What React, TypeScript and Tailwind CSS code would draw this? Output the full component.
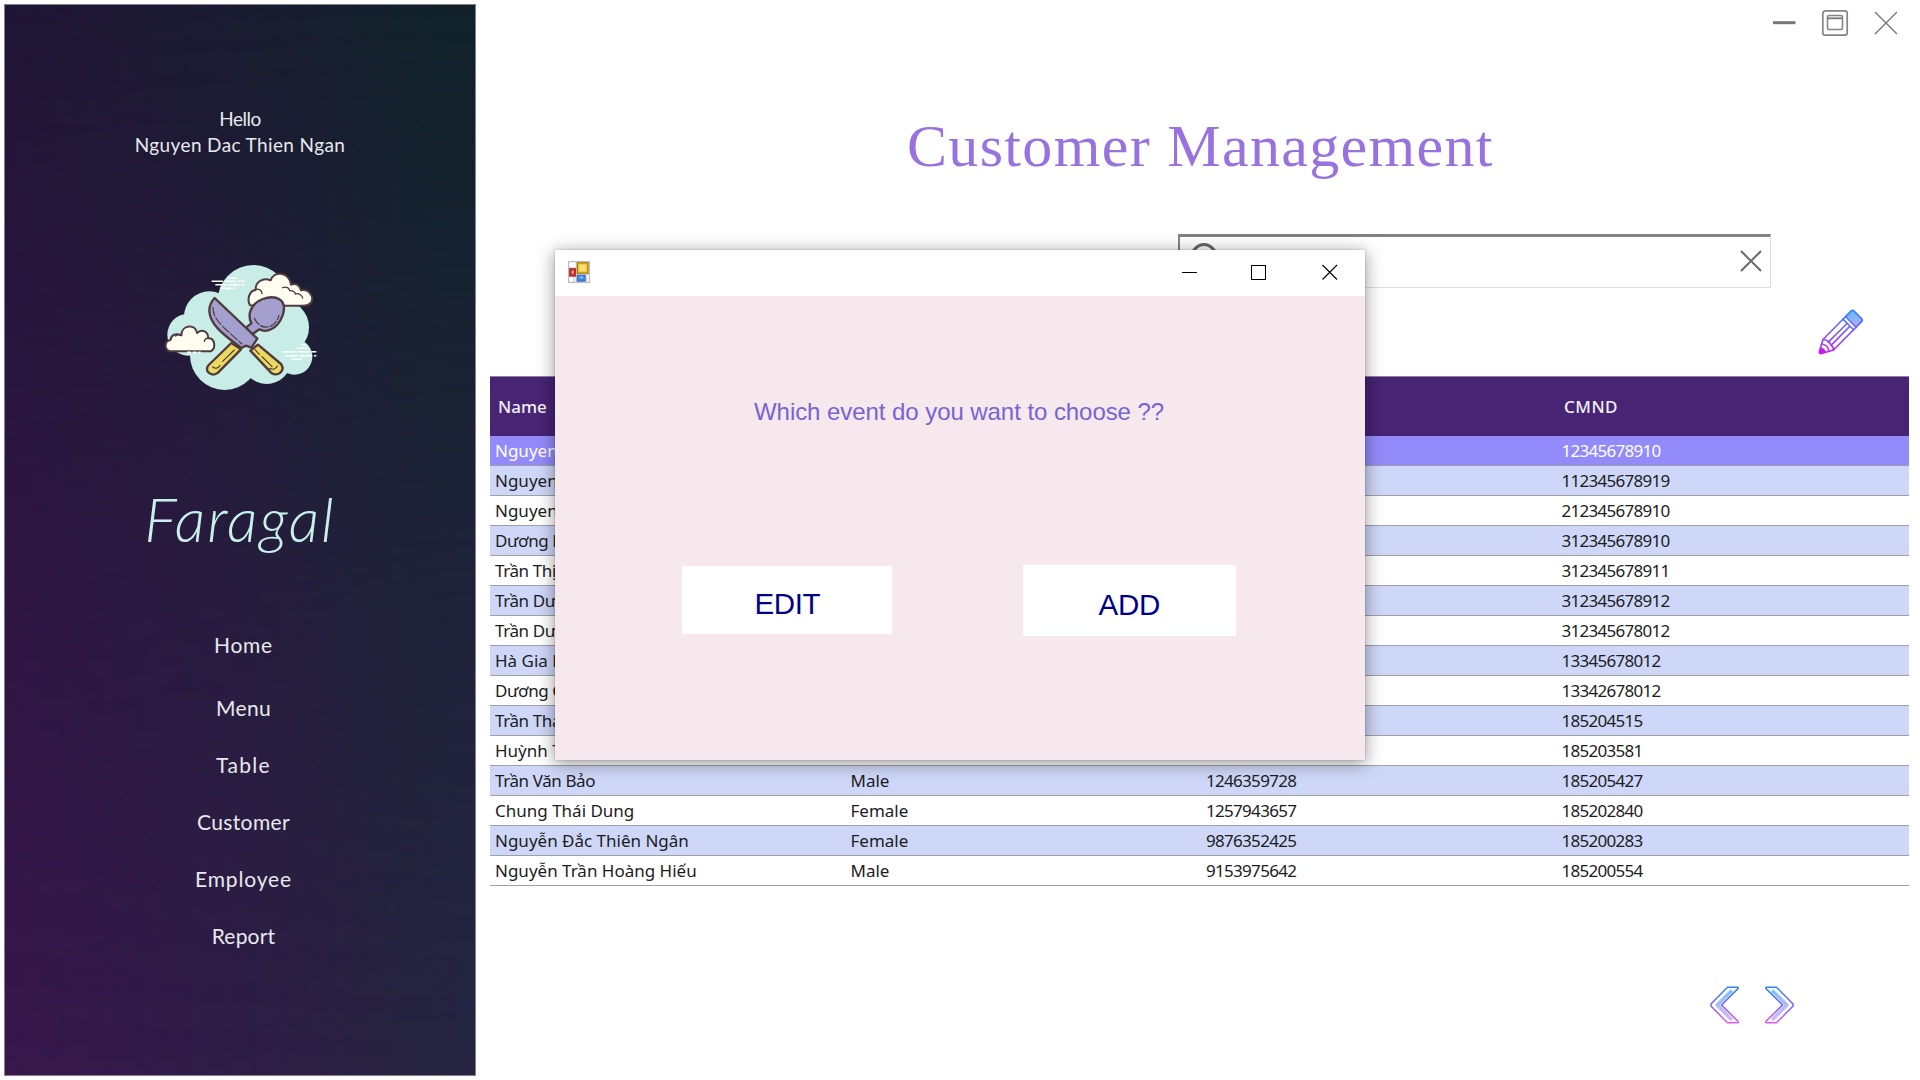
import React from 'react';

const NAV: { label: string; cls: string }[] = [
  { label: 'Home', cls: 'mb-[35px] tracking-[0.7px]' },
  { label: 'Menu', cls: 'mb-[29px] tracking-[0.34px]' },
  { label: 'Table', cls: 'mb-[29px] tracking-[1.3px]' },
  { label: 'Customer', cls: 'mb-[29px] tracking-[0.37px]' },
  { label: 'Employee', cls: 'mb-[29px] tracking-[0.85px]' },
  { label: 'Report', cls: 'tracking-[0.22px]' },
];

type Row = [string, string, string, string];

const ROWS: Row[] = [
  ['Nguyen', '', '', '12345678910'],
  ['Nguyen', '', '', '112345678919'],
  ['Nguyen', '', '', '212345678910'],
  ['Dương H', '', '', '312345678910'],
  ['Trần Thị', '', '', '312345678911'],
  ['Trần Dư', '', '', '312345678912'],
  ['Trần Dư', '', '', '312345678012'],
  ['Hà Gia B', '', '', '13345678012'],
  ['Dương G', '', '', '13342678012'],
  ['Trần Thá', '', '', '185204515'],
  ['Huỳnh T', '', '', '185203581'],
  ['Trần Văn Bảo', 'Male', '1246359728', '185205427'],
  ['Chung Thái Dung', 'Female', '1257943657', '185202840'],
  ['Nguyễn Đắc Thiên Ngân', 'Female', '9876352425', '185200283'],
  ['Nguyễn Trần Hoàng Hiếu', 'Male', '9153975642', '185200554'],
];

function rowColor(i: number) {
  if (i === 0) return 'bg-[#948bfa] text-white';
  return i % 2 === 1 ? 'bg-[#cfd7f8] text-[#1c1c22]' : 'bg-white text-[#1c1c22]';
}

function nameTracking(name: string) {
  return /^(Trần|Dương)/.test(name) ? 'tracking-[-0.4px]' : '';
}

function Logo() {
  const outline = { stroke: '#4f3a3e', strokeWidth: 6, strokeLinejoin: 'round' as const, strokeLinecap: 'round' as const };
  return (
    <svg viewBox="0 0 600 540" className="h-[180px] w-[200px]" fill="none">
      <g fill="#c8ede6">
        <circle cx="340" cy="182" r="107" />
        <circle cx="208" cy="230" r="76" />
        <circle cx="145" cy="284" r="63" />
        <circle cx="254" cy="346" r="104" />
        <circle cx="380" cy="358" r="74" />
        <circle cx="463" cy="350" r="54" />
        <circle cx="425" cy="262" r="82" />
      </g>
      <g stroke="#fff" strokeWidth="4.5">
        <path d="M215 124H316M226 134H313M240 145H286M258 146H273M262 114H290" strokeDasharray="34 5" />
        <path d="M428 335H529M436 347H529M455 358H486M470 325H503M484 314H498" strokeDasharray="38 5" />
      </g>
      <path
        d="M330 196C320 178 328 152 347 150C345 128 368 110 392 121C398 94 446 92 453 134C468 128 480 136 483 151C508 145 522 172 514 186C510 195 500 197 488 197H345Z"
        fill="#fffcf0"
        {...outline}
      />
      <path d="M348 148C358 146 366 152 366 161M428 143C440 138 448 145 449 152C460 151 466 158 466 162C478 158 487 168 488 174" {...outline} strokeWidth="4" />
      <path
        d="M90 334C74 330 70 304 92 299C93 284 108 279 124 286C124 254 168 250 171 279C184 266 204 272 205 295C224 294 230 324 212 334Z"
        fill="#fffcf0"
        {...outline}
      />
      <path d="M193 304C194 297 199 294 206 295M125 286C119 282 110 284 107 288" {...outline} strokeWidth="4" />
      <path d="M141 337H182" stroke="#fff" strokeWidth="5" strokeDasharray="12 5" />
      <path d="M274 309L206 375C190 392 215 414 234 398L303 328Z" fill="#ecd95f" {...outline} strokeWidth="7" />
      <path d="M318 263L336 283L358 268C378 280 412 268 428 226C444 176 406 164 368 177C330 192 322 226 334 250Z" fill="#a3a0cf" {...outline} strokeWidth="7" />
      <path d="M343 234C350 252 365 263 382 261C398 260 411 246 417 226" {...outline} strokeWidth="3.5" strokeDasharray="24 6" />
      <path d="M224 174L352 296L334 323L318 317L304 324C262 292 208 256 208 212C208 192 216 182 224 174Z" fill="#a3a0cf" {...outline} strokeWidth="7" />
      <path d="M219 202C218 236 244 257 306 312" {...outline} strokeWidth="3.5" strokeDasharray="26 7" />
      <path d="M354 314L423 372C437 392 414 412 393 398L331 332Z" fill="#ecd95f" {...outline} strokeWidth="7" />
      <path d="M283 330L248 364M240 376C235 386 225 387 218 381M345 329L358 343M366 350L396 380M388 385C398 390 408 388 412 378" {...outline} strokeWidth="3.5" />
    </svg>
  );
}

function Sidebar() {
  return (
    <aside className="relative mt-1 ml-1 h-[1072px] w-[472px] shrink-0 overflow-hidden border border-[#85808f] bg-[linear-gradient(to_right,#201535,#1a1c30_50%,#11222a_92%)]">
      <div className="absolute inset-0 bg-[linear-gradient(to_right,#38174c,#2f1c47_45%,#272340_85%,#262442)] [mask-image:linear-gradient(to_bottom,transparent,rgba(0,0,0,0.65)_55%,black)]" />
      <div className="relative flex flex-col items-center font-[Lato] text-[#e8e9ee]">
        <div className="mt-[101px] h-[26px] text-[19px] leading-[26px] tracking-[-0.5px]">Hello</div>
        <div className="h-[26px] text-[19px] leading-[26px] tracking-[0.375px]">Nguyen Dac Thien Ngan</div>
        <div className="mt-[82px]">
          <Logo />
        </div>
        <div className="mt-[62px] h-[80px] text-[61px] leading-[74px] font-light tracking-[2px] text-[#c9f0ea] italic">Faragal</div>
        <nav className="mt-[69px] ml-[7px] flex flex-col items-center text-[21px]">
          {NAV.map((n) => (
            <a key={n.label} className={`h-7 leading-7 ${n.cls}`}>
              {n.label}
            </a>
          ))}
        </nav>
      </div>
    </aside>
  );
}

function WindowControls() {
  return (
    <div className="flex h-[46px] items-center justify-end pr-[23px]">
      <svg viewBox="0 0 124 28" className="h-7 w-[124px]" fill="none">
        <path d="M0 13.7H22.5" stroke="#777" strokeWidth="3" />
        <rect x="49.8" y="1.8" width="24.4" height="24.4" rx="2.5" stroke="#858585" strokeWidth="1.7" />
        <rect x="54.5" y="6.5" width="15" height="14" rx="1.5" stroke="#858585" strokeWidth="1.6" />
        <path d="M54.5 9.3H69.5" stroke="#777" strokeWidth="1.8" />
        <path d="M102 3L124 25M124 3L102 25" stroke="#777" strokeWidth="1.4" />
      </svg>
    </div>
  );
}

function SearchBox() {
  return (
    <div className="ml-[688px] flex h-[54px] w-[593px] items-center justify-between border-t-[3px] border-r border-b border-l-2 border-t-[#828282] border-r-[#dedede] border-b-[#dedede] border-l-[#828282] bg-white pr-[8px] pl-[11px]">
      <svg viewBox="0 0 32 32" className="mb-[8px] h-8 w-8" fill="none" stroke="#666" strokeWidth="3">
        <circle cx="13" cy="14" r="11.5" />
        <path d="M21 22L29 30" />
      </svg>
      <svg viewBox="0 0 22 22" className="mb-[2px] h-[22px] w-[22px]" fill="none" stroke="#6a6a6a" strokeWidth="2">
        <path d="M1 1L21 21M21 1L1 21" />
      </svg>
    </div>
  );
}

function Pencil() {
  return (
    <svg viewBox="0 0 46 46" className="h-[46px] w-[46px]" fill="none" strokeLinejoin="round" strokeLinecap="round">
      <defs>
        <linearGradient id="pen" x1="0" y1="0" x2="0" y2="46" gradientUnits="userSpaceOnUse">
          <stop offset="0" stopColor="#2e80fb" />
          <stop offset="0.5" stopColor="#7a62f8" />
          <stop offset="1" stopColor="#c81ff2" />
        </linearGradient>
        <linearGradient id="eraser" x1="0" y1="0" x2="0" y2="18" gradientUnits="userSpaceOnUse">
          <stop offset="0" stopColor="#5cbcfb" />
          <stop offset="1" stopColor="#b5aafb" />
        </linearGradient>
      </defs>
      <path d="M28 7L33 1.8Q34.5 .8 36 2L43.5 9.5Q44.8 11 43.8 12.4L38.5 18Z" fill="url(#eraser)" />
      <g stroke="url(#pen)" strokeWidth="1.7">
        <path d="M5 30.5L33 2Q34.5 .8 36 2L43.5 9.5Q44.8 11 43.8 12.4L15.5 41L3.5 44.5Q1 45 1.5 42Z" />
        <path d="M27.5 7.5L38.2 18.4M25 10.2L35.8 21M29 14.5L10.3 33.2M32 17.2L13 36.3M5 30.5Q9.5 31 10.3 33.2Q12 33.5 13 36.3Q15.5 37.5 15.5 41M4 35Q10 36 11 42.3" />
      </g>
      <path d="M2.8 38.5Q7.5 39.5 8 43.4L2.5 44.8Q1 44.4 1.6 42Z" fill="#c31cf0" />
    </svg>
  );
}

function Chevron({ flip = false }: { flip?: boolean }) {
  return (
    <svg viewBox="0 0 30 38" className={flip ? 'h-[38px] w-[30px] -scale-x-100' : 'h-[38px] w-[30px]'} fill="none" strokeLinejoin="round">
      <defs>
        <linearGradient id={flip ? 'chr' : 'chl'} x1="0" y1="0" x2="0" y2="38" gradientUnits="userSpaceOnUse">
          <stop offset="0" stopColor="#2f86fb" />
          <stop offset="0.5" stopColor="#7b5af5" />
          <stop offset="1" stopColor="#e05cfb" />
        </linearGradient>
        <linearGradient id={flip ? 'cir' : 'cil'} x1="0" y1="0" x2="0" y2="38" gradientUnits="userSpaceOnUse">
          <stop offset="0" stopColor="#6cc6fc" />
          <stop offset="1" stopColor="#e5b5fc" />
        </linearGradient>
      </defs>
      <path d="M22 4.5L7.2 19L22 34" stroke={flip ? 'url(#cir)' : 'url(#cil)'} strokeWidth="3.6" />
      <path d="M17.5 1.2H27.6Q28.8 1.6 28 2.6L11.5 19L28 35.2Q28.8 36.4 27.6 36.8H17.5L1.2 20.3Q.5 19 1.2 17.8Z" stroke={flip ? 'url(#chr)' : 'url(#chl)'} strokeWidth="1.5" />
    </svg>
  );
}

function CustomerTable() {
  return (
    <div className="w-[1419px] overflow-hidden font-['Noto_Sans'] text-[17px]">
      <div className="grid h-[60px] grid-cols-[356px_355px_356px_352px] items-center border-t border-t-[#8f80a8] bg-[#482475] pt-px text-[17px] font-medium text-[#f3f0f8]">
        <div className="pl-[8px]">Name</div>
        <div />
        <div />
        <div className="pl-[7px] tracking-[0.5px]">CMND</div>
      </div>
      {ROWS.map((r, i) => (
        <div key={i} className={`grid h-[30px] grid-cols-[356px_355px_356px_352px] border-b border-[#a0a0a4] leading-[29px] whitespace-nowrap ${rowColor(i)}`}>
          <div className={`pl-[5px] ${nameTracking(r[0])}`}>{r[0]}</div>
          <div className="pl-[4.5px]">{r[1]}</div>
          <div className="pl-[5px] tracking-[-0.7px]">{r[2]}</div>
          <div className="pl-[4.5px] tracking-[-0.72px]">{r[3]}</div>
        </div>
      ))}
    </div>
  );
}

function FormIcon() {
  return (
    <svg viewBox="0 0 22 22" className="mb-[2px] h-[22px] w-[22px]">
      <rect x="0.6" y="0.6" width="20.8" height="20.8" fill="#fff" stroke="#bdbdbd" strokeWidth="1.3" />
      <path d="M8.3 1V21M1 7H8M1 15.8H8M6 16V21M9 13.2H21M18.3 14V21" stroke="#c4c4c4" strokeWidth="1" />
      <rect x="9.4" y="1.8" width="10.6" height="10.4" fill="#f6c22c" stroke="#a87c0c" strokeWidth="1.3" />
      <rect x="11.3" y="3.6" width="6.8" height="6.6" fill="#fce07a" />
      <rect x="1.6" y="7.7" width="6" height="7.4" fill="#c8342a" stroke="#94241e" strokeWidth="0.8" />
      <rect x="3.8" y="9.7" width="1.8" height="3" fill="#f0b0a8" />
      <rect x="9.2" y="14.2" width="8" height="6" fill="#3f83e0" stroke="#2b5fb4" strokeWidth="0.8" />
      <rect x="11.5" y="15.6" width="3.6" height="1.8" fill="#9cc6f8" />
    </svg>
  );
}

function Dialog() {
  return (
    <div className="absolute top-[250px] left-[555px] flex h-[510px] w-[809.5px] flex-col bg-[#f7e8ed] font-['Liberation_Sans'] shadow-[0_3px_16px_1px_rgba(0,0,0,0.38),0_0_2px_rgba(0,0,0,0.25)]">
      <div className="flex h-[46px] items-center justify-between bg-white pr-[27px] pl-[13px]">
        <FormIcon />
        <svg viewBox="0 0 156 16" className="mb-[2px] h-4 w-[156px]" fill="none" stroke="#000" strokeWidth="1.1" shapeRendering="crispEdges">
          <path d="M0 8.5H15" />
          <rect x="69.5" y="1.5" width="14" height="14" />
          <path d="M140.5 1L155 15.5M155 1L140.5 15.5" shapeRendering="auto" />
        </svg>
      </div>
      <p className="mt-[101px] ml-[199px] h-[30px] text-[24px] leading-[30px] tracking-[-0.06px] whitespace-nowrap text-[#7564d3]">Which event do you want to choose ??</p>
      <div className="mt-[137.5px] ml-[127.4px] flex items-center text-[29.5px] text-[#00008b]">
        <button className="h-[68px] w-[210px] bg-white pt-[8px] tracking-[-0.4px]">EDIT</button>
        <button className="ml-[131px] h-[71px] w-[213px] bg-white pt-[10px] pr-px tracking-[-0.25px]">ADD</button>
      </div>
    </div>
  );
}

export default function App() {
  return (
    <div className="relative flex h-[1080px] w-[1920px] overflow-hidden bg-white">
      <Sidebar />
      <main className="ml-[14px] flex w-[1430px] shrink-0 flex-col">
        <WindowControls />
        <h1 className="mt-[68px] mb-[-2px] ml-[417px] h-[64px] font-['Liberation_Serif'] text-[60px] leading-[64px] tracking-[1.33px] whitespace-nowrap text-[#9873df]">Customer Management</h1>
        <div className="mt-[58px]">
          <SearchBox />
        </div>
        <div className="mt-[21px] mb-[21px] flex justify-end pr-[56px]">
          <Pencil />
        </div>
        <CustomerTable />
        <div className="mt-[100px] ml-[1219.5px] flex gap-[24.5px]">
          <Chevron />
          <Chevron flip />
        </div>
      </main>
      <Dialog />
    </div>
  );
}
